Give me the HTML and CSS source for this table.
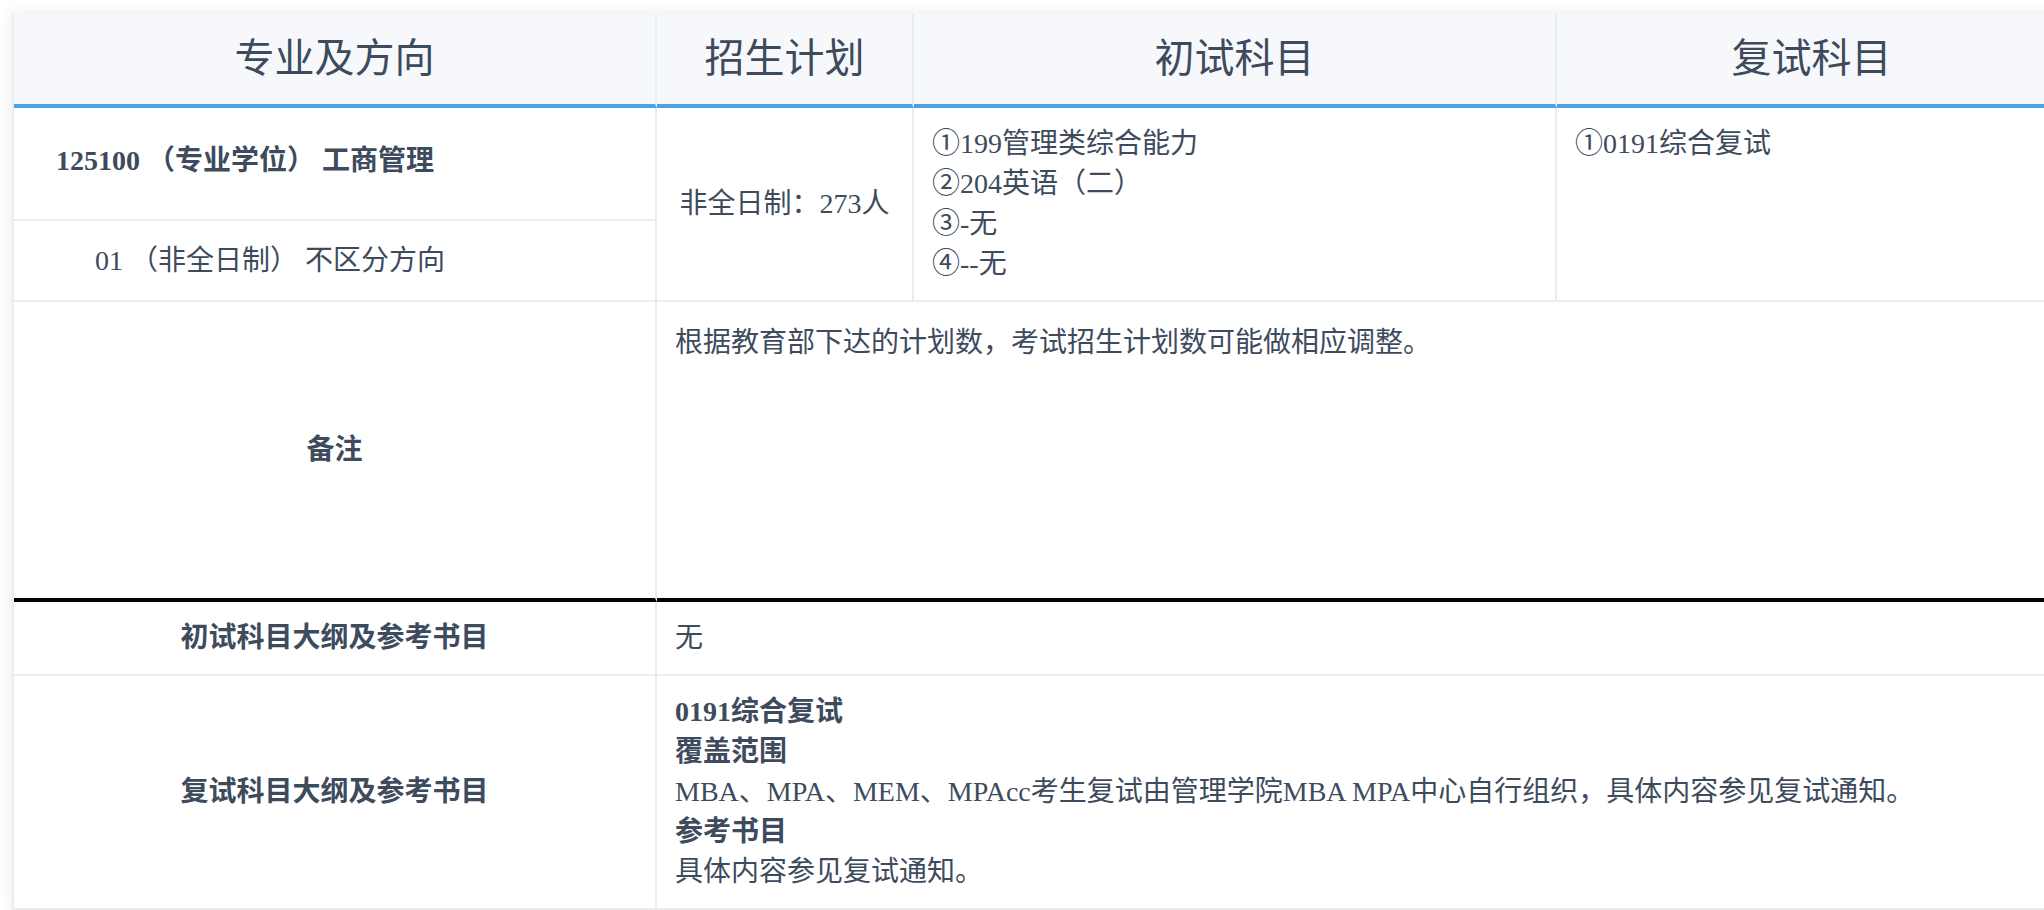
FILE: index.html
```html
<!DOCTYPE html>
<html lang="zh-CN">
<head>
<meta charset="utf-8">
<title>招生专业目录</title>
<link rel="stylesheet" href="styles.css">
</head>
<body>
<div class="sheet">
  <div class="cell th">专业及方向</div>
  <div class="cell th">招生计划</div>
  <div class="cell th">初试科目</div>
  <div class="cell th">复试科目</div>

  <div class="cell major"><b>125100 （专业学位） 工商管理</b></div>
  <div class="cell plan">非全日制：273人</div>
  <div class="cell exam">
    <div>①199管理类综合能力</div>
    <div>②204英语（二）</div>
    <div>③-无</div>
    <div>④--无</div>
  </div>
  <div class="cell retest">①0191综合复试</div>
  <div class="cell direction">01 （非全日制） 不区分方向</div>

  <div class="cell label remark-label">备注</div>
  <div class="cell wide remark">根据教育部下达的计划数，考试招生计划数可能做相应调整。</div>

  <div class="cell label">初试科目大纲及参考书目</div>
  <div class="cell wide">无</div>

  <div class="cell label">复试科目大纲及参考书目</div>
  <div class="cell wide">
    <div class="strong">0191综合复试</div>
    <div class="strong">覆盖范围</div>
    <div>MBA、MPA、MEM、MPAcc考生复试由管理学院MBA MPA中心自行组织，具体内容参见复试通知。</div>
    <div class="strong">参考书目</div>
    <div>具体内容参见复试通知。</div>
  </div>
</div>
</body>
</html>
```

FILE: styles.css
```css
html, body {
  margin: 0;
  overflow: hidden;
  background: #ffffff;
}

body {
  padding: 14px 0 0 12px;
  font-family: "Liberation Serif", "Noto Sans CJK SC", serif;
  color: #3d4b5d;
}

.sheet {
  display: grid;
  width: max-content;
  grid-template-columns: 643px 257px 643px 511px;
  grid-template-rows: 94px 113px 81px 300px 74px 234px;
  border-left: 2px solid #e8edf2;
  box-shadow: 0 0 14px rgba(40, 60, 90, 0.10);
  background: #ffffff;
}

.cell {
  box-sizing: border-box;
  border-right: 2px solid #e8edf2;
  border-bottom: 2px solid #e8edf2;
  font-size: 28px;
  line-height: 40px;
  padding: 16px 18px;
  white-space: nowrap;
}

.th {
  display: flex;
  align-items: center;
  justify-content: center;
  padding: 0;
  background: #f6f8fc;
  border-bottom: 4px solid #4ba4e1;
  font-size: 40px;
}

.major {
  grid-column: 1;
  grid-row: 2;
  padding: 33px 0 0 42px;
}

.major b,
.strong,
.label {
  font-weight: bold;
}

.plan {
  grid-column: 2;
  grid-row: 2 / 4;
  display: flex;
  align-items: center;
  justify-content: center;
  padding: 0;
}

.exam {
  grid-column: 3;
  grid-row: 2 / 4;
}

.retest {
  grid-column: 4;
  grid-row: 2 / 4;
}

.direction {
  grid-column: 1;
  grid-row: 3;
  display: flex;
  align-items: center;
  padding: 0 0 0 81px;
}

.label {
  grid-column: 1;
  display: flex;
  align-items: center;
  justify-content: center;
  padding: 0;
}

.wide {
  grid-column: 2 / 5;
}

.remark-label,
.remark {
  border-bottom: 4px solid #000000;
}

.remark {
  padding-top: 21px;
}
```
